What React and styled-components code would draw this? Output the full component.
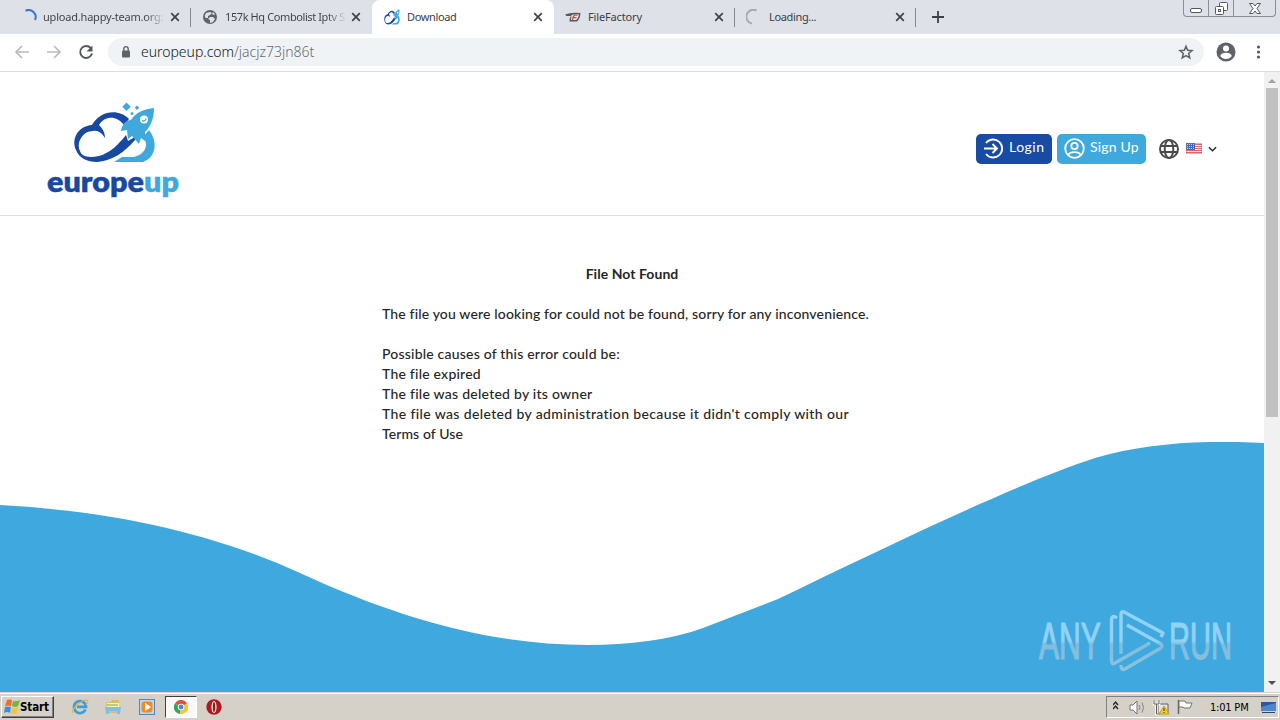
import styled, { createGlobalStyle } from "styled-components";

const GlobalStyle = createGlobalStyle`
  * {
    box-sizing: border-box;
  }
  body {
    margin: 0;
    overflow: hidden;
    background: #ffffff;
  }
  svg {
    display: block;
    flex-shrink: 0;
  }
`;

const Desktop = styled.div`
  display: flex;
  flex-direction: column;
  width: 1280px;
  height: 720px;
  overflow: hidden;
  font-family: "Noto Sans", sans-serif;
`;

const TabStrip = styled.div`
  display: flex;
  height: 34px;
  padding-left: 10px;
  background: #dee1e8;
`;

const Tab = styled.div`
  position: relative;
  display: flex;
  align-items: center;
  width: ${({ $active }) => ($active ? "182px" : "181px")};
  height: 34px;
  padding: 0 9px 0 ${({ $active }) => ($active ? "12px" : "11px")};
  background: ${({ $active }) => ($active ? "#ffffff" : "transparent")};
  border-radius: 8px 8px 0 0;
  &::after {
    content: "";
    position: absolute;
    right: 0;
    top: 8px;
    width: 1px;
    height: 19px;
    background: ${({ $divider }) => ($divider ? "#85898f" : "transparent")};
  }
`;

const TabTitle = styled.span`
  flex: 1;
  margin-left: ${({ $offset }) => $offset || "7px"};
  overflow: hidden;
  white-space: nowrap;
  font-size: 11px;
  line-height: 16px;
  letter-spacing: ${({ $spacing }) => $spacing || "-0.35px"};
  color: ${({ $fade }) => ($fade ? "transparent" : "#3c4043")};
  background: ${({ $fade }) =>
    $fade ? "linear-gradient(90deg, #3c4043 82%, #3c404300 98%)" : "none"};
  background-clip: ${({ $fade }) => ($fade ? "text" : "border-box")};
`;

const NewTab = styled.div`
  display: flex;
  align-items: center;
  padding-left: 16px;
`;

const WindowButtons = styled.div`
  display: flex;
  width: 93px;
  height: 17px;
  margin: 0 4px 0 auto;
  border: 1px solid #8b8e96;
  border-top: none;
  border-radius: 0 0 4px 4px;
`;

const WindowButton = styled.div`
  display: flex;
  align-items: center;
  justify-content: center;
  width: ${({ $width }) => $width};
  border-right: ${({ $last }) => ($last ? "none" : "1px solid #8b8e96")};
`;

const Toolbar = styled.div`
  display: flex;
  align-items: center;
  height: 38px;
  padding: 0 14px 1px;
  gap: 16px;
  background: #ffffff;
  border-bottom: 1px solid #dcdddf;
`;

const NavButtons = styled.div`
  display: flex;
  gap: 16px;
`;

const AddressBar = styled.div`
  display: flex;
  flex-shrink: 0;
  align-items: center;
  width: 1096px;
  height: 28px;
  margin: 0 -4px 0 -2px;
  padding: 0 10px 0 12px;
  border-radius: 14px;
  background: #f0f3f6;
`;

const Url = styled.span`
  flex: 1;
  margin-left: 9px;
  font-size: 14px;
  line-height: 20px;
  font-weight: 300;
  letter-spacing: -0.02px;
  color: #111418;
  & span {
    color: #65696e;
  }
`;

const Viewport = styled.div`
  display: flex;
  height: 620px;
`;

const Page = styled.div`
  position: relative;
  width: 1264px;
  background: #ffffff;
  overflow: hidden;
  font-family: Lato, sans-serif;
`;

const Header = styled.header`
  display: flex;
  align-items: center;
  justify-content: space-between;
  height: 144px;
  padding: 11px 47px 0 45px;
  border-bottom: 1px solid #dfdfdf;
`;

const HeaderActions = styled.div`
  display: flex;
  align-items: center;
  margin-bottom: 1px;
`;

const HeaderButton = styled.button`
  display: flex;
  align-items: center;
  width: ${({ $width }) => $width};
  height: 30px;
  margin-right: 5px;
  padding: 0 0 0 7px;
  gap: ${({ $gap }) => $gap};
  border: none;
  border-radius: 5px;
  background: ${({ $color }) => $color};
  color: #ffffff;
  font-family: Lato, sans-serif;
  font-size: 14px;
  line-height: 26px;
  letter-spacing: ${({ $spacing }) => $spacing};
  white-space: nowrap;
  & span {
    padding-bottom: 3px;
  }
`;

const LanguagePicker = styled.div`
  display: flex;
  align-items: center;
  margin-left: 8px;
  gap: 6px;
`;

const Message = styled.main`
  width: 500px;
  height: 226px;
  margin: 0 auto;
  padding-top: 48px;
  color: #262626;
  font-size: 14px;
  font-weight: 500;
  line-height: 20px;
  white-space: nowrap;
`;

const MessageTitle = styled.h1`
  margin: 0 0 20px;
  font-size: 14px;
  line-height: 20px;
  font-weight: 700;
  letter-spacing: 0.05px;
  text-align: center;
`;

const MessageLine = styled.p`
  margin: 0 0 ${({ $gap }) => $gap || "0"};
  letter-spacing: ${({ $spacing }) => $spacing};
`;

const Watermark = styled.div`
  position: absolute;
  right: 24px;
  bottom: 17px;
`;

const Scrollbar = styled.div`
  display: flex;
  flex-direction: column;
  align-items: center;
  width: 16px;
  background: #f1f1f1;
`;

const ScrollThumb = styled.div`
  width: 12px;
  height: 329px;
  margin-bottom: auto;
  background: #c1c1c1;
`;

const Taskbar = styled.div`
  display: flex;
  align-items: center;
  height: 28px;
  padding: 1px 1px 0;
  background: #d5d0c8;
  border-top: 1px solid #d5d0c8;
  box-shadow: inset 0 1px 0 #ffffff;
`;

const StartButton = styled.div`
  display: flex;
  align-items: center;
  width: 53px;
  height: 22px;
  padding-left: 2px;
  border: 1px solid;
  border-color: #ffffff #404040 #404040 #ffffff;
  box-shadow: inset -1px -1px 0 #808080;
  color: #000000;
  font-family: "DejaVu Sans Condensed", "DejaVu Sans", sans-serif;
  font-size: 11.5px;
  font-weight: 700;
  letter-spacing: -0.1px;
`;

const QuickLaunch = styled.div`
  display: flex;
  align-items: center;
  margin-left: 9px;
`;

const LaunchItem = styled.div`
  display: flex;
  align-items: center;
  justify-content: center;
  width: ${({ $pressed }) => ($pressed ? "32px" : "33.5px")};
  height: 22px;
  margin: ${({ $pressed }) => ($pressed ? "0 1px" : "0")};
  border: 1px solid transparent;
  border-color: ${({ $pressed }) =>
    $pressed ? "#404040 #ffffff #ffffff #404040" : "transparent"};
  background: ${({ $pressed }) => ($pressed ? "#faf9f8" : "transparent")};
`;

const Tray = styled.div`
  display: flex;
  align-items: center;
  width: 173px;
  height: 22px;
  margin-left: auto;
  padding: 0 1px 0 6px;
  border: 1px solid;
  border-color: #808080 #ffffff #ffffff #808080;
`;

const Clock = styled.span`
  width: 51px;
  margin-left: 15px;
  color: #000000;
  font-family: "DejaVu Sans Condensed", "DejaVu Sans", sans-serif;
  font-size: 11px;
  letter-spacing: -0.2px;
  white-space: nowrap;
`;

const CloseIcon = () => (
  <svg width="14" height="14" viewBox="0 0 14 14">
    <path d="M3.2 3.2l7.6 7.6M10.8 3.2l-7.6 7.6" stroke="#3f4347" strokeWidth="1.7" />
  </svg>
);

const SpinnerIcon = ({ color, loading }) => (
  <svg width="16" height="16" viewBox="0 0 16 16" fill="none">
    <path
      d={loading ? "M10.5 1.5A7 7 0 1 0 6 14.6" : "M4.5 1.8A7 7 0 0 1 14 11"}
      stroke={color}
      strokeWidth="2"
    />
  </svg>
);

const WebIcon = () => (
  <svg width="16" height="16" viewBox="0 0 16 16">
    <circle cx="8" cy="8" r="7" fill="#5f6368" />
    <path
      d="M4 4l4-1 2 1-2 2-2 1v2H3.5L2.7 7zM8 8h3l2 2-2 3-3 1v-3L6 10zM11 3l2 2-1 1-2-1z"
      fill="#dee1e8"
    />
  </svg>
);

// cloud and rocket, shared by the page logo and the tab icon
const CloudRocket = () => (
  <g>
    <path
      d="M84 28C73 17 55 20 47 34C33 35 26 48 31 59C34 67 42 71 52 71C67 70 80 61 90 49L90 46L83 50L81 44C73 54 65 62 54 65C44 67 37 66 35 60C31 51 38 40 48 40C53 39 57 42 60 47C60 41 57 37 54 34C60 25 71 24 79 34Z"
      fill="#1748a2"
    />
    <path
      d="M109 17C99 18 91 21 86 29C80 29 77 34 76 40L82 39L83 48L87 45L94 53L96 47L100 50L100 41C106 35 109 27 109 17Z"
      fill="#3fa9dd"
    />
    <path
      d="M104 39C114 52 110 67 98 71H69L77 66H89C101 63 104 53 98 46Z"
      fill="#3fa9dd"
    />
    <circle cx="99" cy="28.5" r="4" fill="#ffffff" />
    <path d="M97 29.5a2.5 2.5 0 0 0 4-2" fill="none" stroke="#3fa9dd" strokeWidth="1.3" />
  </g>
);

const EuropeupLogo = () => (
  <svg width="136" height="112" viewBox="0 2 136 112">
    <CloudRocket />
    <path d="M81.5 11.5l4.2 4.2-4.2 4.2-4.2-4.2zM92 14.5l2.3 2.3-2.3 2.3-2.3-2.3z" fill="#3fa9dd" />
    <circle cx="87" cy="22.5" r="1.5" fill="#3fa9dd" />
    <text
      x="2"
      y="101"
      textLength="132"
      lengthAdjust="spacingAndGlyphs"
      fontFamily="Lato, sans-serif"
      fontSize="29"
      fontWeight="800"
      strokeWidth="0.4"
      strokeLinejoin="round"
      stroke="#1748a2"
      fill="#1748a2"
    >
      europe
      <tspan fill="#3fa9dd" stroke="#3fa9dd">
        up
      </tspan>
    </text>
  </svg>
);

const EuropeupIcon = () => (
  <svg width="16" height="16" viewBox="28 15 83 58" preserveAspectRatio="none">
    <CloudRocket />
  </svg>
);

const FactoryIcon = () => (
  <svg width="16" height="16" viewBox="0 0 16 16" fill="none">
    <path d="M0 5.5Q6 3 15.5 4Q15 10 12 12.5H4.5Q4 9 6 7H1.5z" fill="#55585c" />
    <path d="M6.5 6Q10 5 14 5.5Q13 10 11 11H6z" fill="#e9e9ec" />
    <path d="M12.5 6.2H9.5Q8 7 7.5 11M8 8.6h3.5" stroke="#c4503e" strokeWidth="1.3" />
  </svg>
);

const ArrowIcon = ({ forward }) => (
  <svg width="16" height="16" viewBox="0 0 16 16" fill="none">
    <path
      d={forward ? "M1 8h13M8 2l6 6-6 6" : "M15 8H2M8 2L2 8l6 6"}
      stroke="#b9bbbe"
      strokeWidth="1.7"
    />
  </svg>
);

const ReloadIcon = () => (
  <svg width="16" height="16" viewBox="0 0 16 16" fill="none">
    <path d="M12.8 4.1A6 6 0 1 0 14 9.5" stroke="#54585c" strokeWidth="1.9" />
    <path d="M14.5 1.5v6h-6z" fill="#54585c" />
  </svg>
);

const LockIcon = () => (
  <svg width="12" height="14" viewBox="0 0 12 14">
    <rect x="2" y="5.5" width="8" height="7" rx="1" fill="#5f6368" />
    <path d="M3.8 6V3.8a2.2 2.2 0 0 1 4.4 0V6" fill="none" stroke="#5f6368" strokeWidth="1.4" />
  </svg>
);

const StarIcon = () => (
  <svg width="16" height="16" viewBox="0 0 24 24">
    <path
      d="M12 3.5l2.5 6 6.5.5-5 4.3 1.6 6.4-5.6-3.4-5.6 3.4L8 14.3 3 10l6.5-.5z"
      fill="none"
      stroke="#5f6368"
      strokeWidth="2.3"
    />
  </svg>
);

const ProfileIcon = () => (
  <svg width="20" height="20" viewBox="0 0 20 20">
    <circle cx="10" cy="10" r="9.5" fill="#5f6368" />
    <circle cx="10" cy="6.5" r="3" fill="#ffffff" />
    <path d="M4.2 14c.5-2.6 3-3.3 5.8-3.3s5.3.7 5.8 3.3c-1.3 2-3.3 3-5.8 3s-4.5-1-5.8-3z" fill="#ffffff" />
  </svg>
);

const MenuIcon = () => (
  <svg width="12" height="16" viewBox="0 0 12 16" fill="#54585c">
    <circle cx="6.5" cy="3" r="1.6" />
    <circle cx="6.5" cy="8" r="1.6" />
    <circle cx="6.5" cy="13" r="1.6" />
  </svg>
);

const LoginIcon = () => (
  <svg width="21" height="21" viewBox="0 0 21 21" fill="none" stroke="#ffffff" strokeWidth="1.9">
    <path d="M3 5A9 9 0 1 1 3 16M1 10.5h12.5M9.5 6l4.5 4.5L9.5 15" />
  </svg>
);

const UserIcon = () => (
  <svg width="21" height="21" viewBox="0 0 21 21" fill="none" stroke="#ffffff" strokeWidth="1.8">
    <circle cx="10.5" cy="10.5" r="9.3" />
    <circle cx="10.5" cy="8" r="3.2" />
    <path d="M4 17c2.5-3.8 10.5-3.8 13 0" />
  </svg>
);

const GlobeIcon = () => (
  <svg width="20" height="20" viewBox="0 0 20 20" fill="none" stroke="#4b4b4b" strokeWidth="2">
    <circle cx="10" cy="10" r="9" />
    <ellipse cx="10" cy="10" rx="4.3" ry="9" />
    <path d="M1.8 7h16.4M1.8 13h16.4" />
  </svg>
);

const FlagIcon = () => (
  <svg width="17" height="11" viewBox="-1 0 17 11">
    <rect width="16" height="11" fill="#f4e9ec" />
    <path d="M0 1.5h16M0 3.5h16M0 5.5h16M0 7.5h16M0 9.5h16" stroke="#dc6965" />
    <rect width="9" height="7" fill="#376fb9" />
    <path d="M1 1.5h8M1 3.5h8M1 5.5h8" stroke="#c3d6ed" strokeDasharray="1 1" />
    <rect x=".5" y=".5" width="15" height="10" fill="none" stroke="#bd575d" strokeOpacity=".4" />
  </svg>
);

const Wave = () => (
  <svg width="1264" height="250" viewBox="0 0 1264 250">
    <path
      d="M0 63C110 69 210 90 300 131C398 176 490 203 588 203C628 203 670 198 703 186L778 157C880 108 1015 42 1095 16C1150 0 1210 -2 1264 1V250H0Z"
      fill="#3fa9df"
    />
  </svg>
);

const AnyRunLogo = () => (
  <svg width="204" height="68" viewBox="0 0 204 68">
    <defs>
      <linearGradient id="silver" x1="0" y1="0" x2="0" y2="68" gradientUnits="userSpaceOnUse">
        <stop offset="0.5" stopColor="#91d2f5" />
        <stop offset="0.55" stopColor="#80bddd" />
        <stop offset="1" stopColor="#91c3dc" />
      </linearGradient>
      <linearGradient id="silverText" x1="0" y1="-52" x2="0" y2="16" gradientUnits="userSpaceOnUse">
        <stop offset="0.5" stopColor="#91d2f5" />
        <stop offset="0.55" stopColor="#80bddd" />
        <stop offset="1" stopColor="#91c3dc" />
      </linearGradient>
    </defs>
    <g fill="none" stroke="url(#silver)" strokeWidth="3.4" strokeLinejoin="round">
      <path d="M81 11Q75.5 7 75.5 14V54Q75.5 58 79 56L114 36" />
      <path d="M125 30L127 26L88 5Q85 4 85 8V47" />
      <path d="M91 18L124 36.5Q128 39 124 41.5L89 62Q85 64 85 58" />
    </g>
    <g
      fontFamily="'Liberation Sans', sans-serif"
      fontSize="51"
      fill="url(#silverText)"
      stroke="url(#silverText)"
      strokeWidth="1.2"
    >
      <text transform="translate(3 52) scale(0.59 1)">ANY</text>
      <text transform="translate(133 52) scale(0.57 1)">RUN</text>
    </g>
  </svg>
);

const ScrollArrow = ({ down }) => (
  <svg width="16" height={down ? 18 : 16} viewBox="0 0 16 16">
    <path d={down ? "M4 6h8l-4 4z" : "M4 11h8L8 7z"} fill={down ? "#505050" : "#a3a3a3"} />
  </svg>
);

const WindowsIcon = () => (
  <svg width="16" height="16" viewBox="0 0 16 16">
    <path d="M3 1q3-1 5 0L7 7Q4 6 1 7z" fill="#ed6d2d" />
    <path d="M9 2q3 1 7-1l-2 6q-3 2-6 0z" fill="#75b63c" />
    <path d="M1 8q3-1 6 0l-1 6q-3-2-6 0z" fill="#3f8edd" />
    <path d="M8 9q3 1 6-1l-1 6q-3 2-6 0z" fill="#f4c62d" />
  </svg>
);

const ExplorerIcon = () => (
  <svg width="18" height="18" viewBox="0 0 18 18" fill="none">
    <path d="M14.5 11.5A6 6 0 1 1 15 8.8H6" stroke="#3a9ddc" strokeWidth="2.7" />
    <path d="M2 15C0 11 10 2 16 2q2 1-1 5" stroke="#dfb64a" strokeWidth="1.2" />
  </svg>
);

const FolderIcon = () => (
  <svg width="18" height="18" viewBox="0 0 18 18">
    <path d="M2 4h5l1-2h7v13H2z" fill="#dcbf63" />
    <path d="M3 5h12v4H3z" fill="#fff0a5" />
    <path d="M1 9h16l-1 7h-3v-3H5v3H2z" fill="#83bfdb" />
    <path d="M3 7h11" stroke="#67ae66" />
  </svg>
);

const PlayerIcon = () => (
  <svg width="16" height="16" viewBox="0 0 16 16">
    <rect x=".5" y=".5" width="15" height="15" fill="#b8d9ed" stroke="#498ac4" />
    <rect x="2.5" y="2.5" width="11" height="11" rx="3" fill="#f18b21" />
    <path d="M6 4l6 4-6 4z" fill="#ffffff" />
  </svg>
);

const ChromeIcon = () => (
  <svg width="14" height="14" viewBox="0 0 16 16">
    <path d="M8 8L1 4a8 8 0 0 1 14 0z" fill="#de5042" />
    <path d="M8 8L1 4a8 8 0 0 0 6 12z" fill="#38a15c" />
    <path d="M8 8l7-4A8 8 0 0 1 7 16z" fill="#f3c63d" />
    <circle cx="8" cy="8" r="3.7" fill="#ffffff" />
    <circle cx="8" cy="8" r="2.8" fill="#4b88dc" />
  </svg>
);

const OperaIcon = () => (
  <svg width="16" height="16" viewBox="0 0 16 16">
    <circle cx="8" cy="8" r="7.7" fill="#ab1c20" />
    <ellipse cx="8" cy="8" rx="2.6" ry="6" fill="#eee7e5" />
    <ellipse cx="8" cy="8" rx="1.2" ry="5" fill="#9c171b" />
  </svg>
);

const TrayIcons = () => (
  <svg width="82" height="20" viewBox="0 0 82 20" fill="none">
    <path d="M0 8l2.5-3L5 8M0 12l2.5-3L5 12" stroke="#222222" strokeWidth="1.4" />
    <path d="M17 8h3l4-4v13l-4-4h-3z" fill="#ffffff" stroke="#75736f" />
    <path d="M26 8q2 2.5 0 5M29 5.5q3 5 0 10" stroke="#85827e" />
    <path d="M45 7h10v9H45z" fill="#e6e4df" stroke="#5f605e" />
    <path d="M41 3v4h5V3M43.5 7v10H48" stroke="#ffffff" strokeWidth="2.5" />
    <path d="M41 3v4h5V3M43.5 7v10H48" stroke="#5c5c59" />
    <path d="M51 9l5 8H46z" fill="#f5cf22" stroke="#bda12d" />
    <path d="M51 11v3M51 15v1" stroke="#38351f" />
    <path d="M65.5 3v14" stroke="#65645f" strokeWidth="1.5" />
    <path d="M66 4h6l1 2h6l-2 5h-6l-1-1h-4z" fill="#f9f9f7" stroke="#777570" />
  </svg>
);

const DesktopIcon = () => (
  <svg width="17" height="16" viewBox="0 0 17 16">
    <path d="M1 3h15v9H1z" fill="#2859a5" />
    <path d="M1 8l15-4v8H1z" fill="#4d87ca" />
    <path d="M2 13h13v1H2z" fill="#24466f" />
  </svg>
);

const lines = [
  {
    text: "The file you were looking for could not be found, sorry for any inconvenience.",
    spacing: "0.155px",
    gap: "20px",
  },
  { text: "Possible causes of this error could be:", spacing: "0.2px" },
  { text: "The file expired", spacing: "0.22px" },
  { text: "The file was deleted by its owner", spacing: "0.25px" },
  {
    text: "The file was deleted by administration because it didn't comply with our",
    spacing: "0.37px",
  },
  { text: "Terms of Use", spacing: "0.1px" },
];

const App = () => {
  return (
    <>
      <GlobalStyle />
      <Desktop>
        <TabStrip>
          <Tab $divider>
            <SpinnerIcon color="#3779c6" />
            <TabTitle $fade $offset="6px" $spacing="-0.2px">
              upload.happy-team.org:
            </TabTitle>
            <CloseIcon />
          </Tab>
          <Tab>
            <WebIcon />
            <TabTitle $fade $spacing="-0.4px">
              157k Hq Combolist Iptv S
            </TabTitle>
            <CloseIcon />
          </Tab>
          <Tab $active>
            <EuropeupIcon />
            <TabTitle>Download</TabTitle>
            <CloseIcon />
          </Tab>
          <Tab $divider>
            <FactoryIcon />
            <TabTitle $spacing="-0.15px">FileFactory</TabTitle>
            <CloseIcon />
          </Tab>
          <Tab $divider>
            <SpinnerIcon color="#a6a9af" loading />
            <TabTitle>Loading...</TabTitle>
            <CloseIcon />
          </Tab>
          <NewTab>
            <svg width="12" height="12" viewBox="0 0 12 12">
              <path d="M6 0v12M0 6h12" stroke="#3c4043" strokeWidth="1.8" />
            </svg>
          </NewTab>
          <WindowButtons>
            <WindowButton $width="25px">
              <svg width="12" height="12" viewBox="0 0 12 12">
                <rect x=".5" y="6.5" width="11" height="4" rx="1.5" fill="#ffffff" stroke="#555961" />
              </svg>
            </WindowButton>
            <WindowButton $width="25px">
              <svg width="13" height="13" viewBox="0 0 13 13" fill="#ffffff" stroke="#555961">
                <rect x="4.5" y=".5" width="8" height="8" rx="1" />
                <rect x=".5" y="4.5" width="8" height="8" rx="1" />
                <rect x="3.5" y="7.5" width="2" height="2" />
              </svg>
            </WindowButton>
            <WindowButton $width="41px" $last>
              <svg width="12" height="11" viewBox="0 0 12 11">
                <path
                  d="M.5.5h3.5L6 3l2-2.5h3.5L8 5.5l3.5 5H8L6 8l-2 2.5H.5L4 5.5z"
                  fill="#ffffff"
                  stroke="#555961"
                />
              </svg>
            </WindowButton>
          </WindowButtons>
        </TabStrip>
        <Toolbar>
          <NavButtons>
            <ArrowIcon />
            <ArrowIcon forward />
            <ReloadIcon />
          </NavButtons>
          <AddressBar>
            <LockIcon />
            <Url>
              europeup.com<span>/jacjz73jn86t</span>
            </Url>
            <StarIcon />
          </AddressBar>
          <ProfileIcon />
          <MenuIcon />
        </Toolbar>
        <Viewport>
          <Page>
            <Header>
              <EuropeupLogo />
              <HeaderActions>
                <HeaderButton $color="#174ba4" $width="76px" $gap="5px" $spacing="0.5px">
                  <LoginIcon />
                  <span>Login</span>
                </HeaderButton>
                <HeaderButton $color="#3fa9dd" $width="89px" $gap="5px" $spacing="0.2px">
                  <UserIcon />
                  <span>Sign Up</span>
                </HeaderButton>
                <LanguagePicker>
                  <GlobeIcon />
                  <FlagIcon />
                  <svg width="9" height="6" viewBox="0 0 10 6" fill="none">
                    <path d="M1 1l4 4 4-4" stroke="#222222" strokeWidth="1.5" />
                  </svg>
                </LanguagePicker>
              </HeaderActions>
            </Header>
            <Message>
              <MessageTitle>File Not Found</MessageTitle>
              {lines.map(({ text, spacing, gap }) => (
                <MessageLine key={text} $spacing={spacing} $gap={gap}>
                  {text}
                </MessageLine>
              ))}
            </Message>
            <Wave />
            <Watermark>
              <AnyRunLogo />
            </Watermark>
          </Page>
          <Scrollbar>
            <ScrollArrow />
            <ScrollThumb />
            <ScrollArrow down />
          </Scrollbar>
        </Viewport>
        <Taskbar>
          <StartButton>
            <WindowsIcon />
            Start
          </StartButton>
          <QuickLaunch>
            <LaunchItem>
              <ExplorerIcon />
            </LaunchItem>
            <LaunchItem>
              <FolderIcon />
            </LaunchItem>
            <LaunchItem>
              <PlayerIcon />
            </LaunchItem>
            <LaunchItem $pressed>
              <ChromeIcon />
            </LaunchItem>
            <LaunchItem>
              <OperaIcon />
            </LaunchItem>
          </QuickLaunch>
          <Tray>
            <TrayIcons />
            <Clock>1:01 PM</Clock>
            <DesktopIcon />
          </Tray>
        </Taskbar>
      </Desktop>
    </>
  );
};

export default App;
